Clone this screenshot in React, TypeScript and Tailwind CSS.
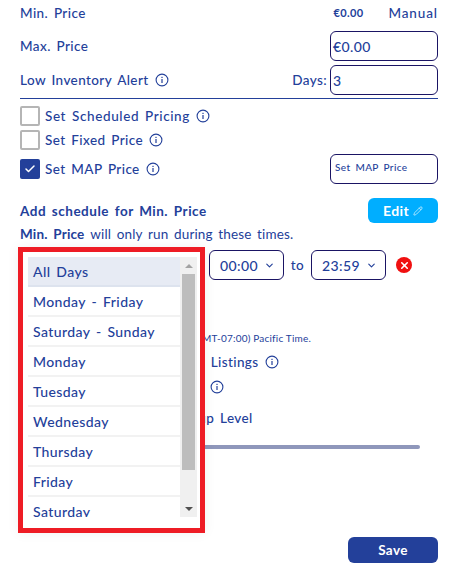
import React from "react";
import { ChevronDown, Pencil, X, Check } from "lucide-react";

const Info = ({ className = "" }: { className?: string }) => (
  <svg width="14" height="14" viewBox="0 0 14 14" fill="none" className={`shrink-0 text-[#23409a] ${className}`}>
    <circle cx="7" cy="7" r="5.9" stroke="currentColor" strokeWidth="1.1" />
    <rect x="6.4" y="6" width="1.2" height="4" fill="currentColor" />
    <rect x="6.4" y="3.8" width="1.2" height="1.2" fill="currentColor" />
  </svg>
);

const Box = ({ checked = false }: { checked?: boolean }) =>
  checked ? (
    <span className="flex h-5 w-5 shrink-0 items-center justify-center rounded-[2px] bg-[#23409a]">
      <Check size={12} strokeWidth={3} className="text-white" />
    </span>
  ) : (
    <span className="h-5 w-5 shrink-0 rounded-[2px] border-2 border-[#b5b5b5] bg-white" />
  );

const TimeSelect = ({ value }: { value: string }) => (
  <div className="flex h-[30px] w-[75px] items-center justify-between rounded-[6px] border border-[#1a1464] pl-2.5 pr-2 text-[14px]">
    <span>{value}</span>
    <ChevronDown size={11} strokeWidth={2.5} />
  </div>
);

const days = ["All Days", "Monday - Friday", "Saturday - Sunday", "Monday", "Tuesday", "Wednesday", "Thursday", "Friday", "Saturday", "Sunday"];

export default function App() {
  return (
    <div className="relative h-[588px] w-[461px] overflow-hidden bg-white pl-5 pr-[23px] text-[#23409a] [font-family:Lato,'Open_Sans',sans-serif] [word-spacing:2px] tracking-[0.4px] text-[13.5px] font-medium">
      <div className="flex h-[27px] items-center">
        <span className="flex-1">Min. Price</span>
        <span className="w-[55px] text-[11px] font-bold">€0.00</span>
        <span className="tracking-[0.9px]">Manual</span>
      </div>
      <div className="mt-[4px] flex h-[30px] items-center justify-between">
        <span>Max. Price</span>
        <div className="flex h-[30px] w-[108px] items-center rounded-[6px] border border-[#1a1464] pl-[2px] text-[14px]">€0.00</div>
      </div>
      <div className="mt-[4px] flex h-[30px] items-center">
        <span>Low Inventory Alert</span>
        <Info className="ml-[6px]" />
        <span className="ml-auto mr-[3px]">Days:</span>
        <div className="flex h-[30px] w-[108px] items-center rounded-[6px] border border-[#1a1464] pl-[2px] text-[14px]">3</div>
      </div>
      <div className="mt-[3px] h-[1px] w-full bg-[#23409a]" />
      <div className="mt-[7px] flex h-5 items-center gap-[5px]">
        <Box />
        <span className="tracking-[0.6px]">Set Scheduled Pricing</span>
        <Info className="ml-[1px]" />
      </div>
      <div className="mt-[4px] flex h-5 items-center gap-[5px]">
        <Box />
        <span>Set Fixed Price</span>
        <Info className="ml-[1px]" />
      </div>
      <div className="mt-[4px] flex h-[30px] items-center gap-[5px]">
        <Box checked />
        <span>Set MAP Price</span>
        <Info className="ml-[1px]" />
        <div className="ml-auto flex h-[30px] w-[108px] items-start rounded-[6px] border border-[#1a1464] pl-[4px] pt-[5px] text-[10px]">Set MAP Price</div>
      </div>

      <div className="mt-[14px] flex h-[25px] items-center justify-between">
        <span className="self-start pt-[3px] text-[13.5px] font-bold tracking-[0.5px]">Add schedule for Min. Price</span>
        <span className="flex h-[25px] w-[70px] items-center justify-center gap-1 rounded-[6px] bg-[#00aeff] text-[14px] font-bold text-white">
          Edit <Pencil size={10} strokeWidth={1.5} />
        </span>
      </div>
      <div className="mt-[1px] h-[20px] text-[13.5px] leading-[20px]">
        <span className="font-bold tracking-[0.2px]">Min. Price</span> <span className="font-normal tracking-[0.15px]">will only run during these times.</span>
      </div>

      <div className="mt-[6px] flex h-[30px] items-center pl-[189px]">
        <TimeSelect value="00:00" />
        <span className="w-[27px] text-center">to</span>
        <TimeSelect value="23:59" />
        <span className="ml-[10px] flex h-4 w-4 items-center justify-center rounded-full bg-[#f01010]">
          <X size={11} strokeWidth={3.5} className="text-white" />
        </span>
      </div>

      <div className="mt-[52px] flex h-3 items-center justify-end pr-[127px] text-[10px] font-normal tracking-[0.2px] [word-spacing:0]">
        <span>Timezone (GMT-07:00) Pacific Time.</span>
      </div>
      <div className="mt-[10px] flex h-4 items-center pl-[168px]">
        <span>All Listings</span>
        <Info className="ml-[6px]" />
      </div>
      <div className="mt-[9px] flex h-4 items-center pl-[190px]">
        <Info />
      </div>
      <div className="mt-[15px] flex h-4 items-center pl-[155px]">
        <span>Group Level</span>
      </div>
      <div className="ml-[130px] mt-[19px] h-[4px] w-[270px] rounded-full bg-[#8f97bb]" />

      <div className="mt-[88px] flex justify-end">
        <span className="flex h-[26px] w-[90px] items-center justify-center rounded-[6px] bg-[#23409a] text-[13.5px] font-bold text-white">Save</span>
      </div>

      <div className="absolute left-[18px] top-[247px] h-[286px] w-[187px] border-[5px] border-[#ee1c25] bg-white py-[5px] pl-[5px] pr-[3px] shadow-[0_0_12px_rgba(0,0,0,0.06)]">
        <div className="flex h-[260px] overflow-hidden">
          <ul className="w-[152px] shrink-0">
            {days.map((d, i) => (
              <li
                key={d}
                className={`flex h-[30px] items-center border-b-2 px-[5px] text-[14px] ${i === 0 ? "border-[#dde3ee] bg-[#e7ebf4]" : "border-[#f2f2f2]"}`}
              >
                {d}
              </li>
            ))}
          </ul>
          <div className="flex w-[17px] shrink-0 flex-col items-center bg-[#f0f0f0]">
            <div className="flex h-[17px] items-center justify-center">
              <span className="h-0 w-0 border-x-[4px] border-b-[4px] border-x-transparent border-b-[#a3a3a3]" />
            </div>
            <div className="h-[196px] w-[13px] bg-[#bdbdbd]" />
            <div className="mt-auto flex h-[17px] items-center justify-center">
              <span className="h-0 w-0 border-x-[4px] border-t-[4px] border-x-transparent border-t-[#505050]" />
            </div>
          </div>
        </div>
      </div>
    </div>
  );
}
